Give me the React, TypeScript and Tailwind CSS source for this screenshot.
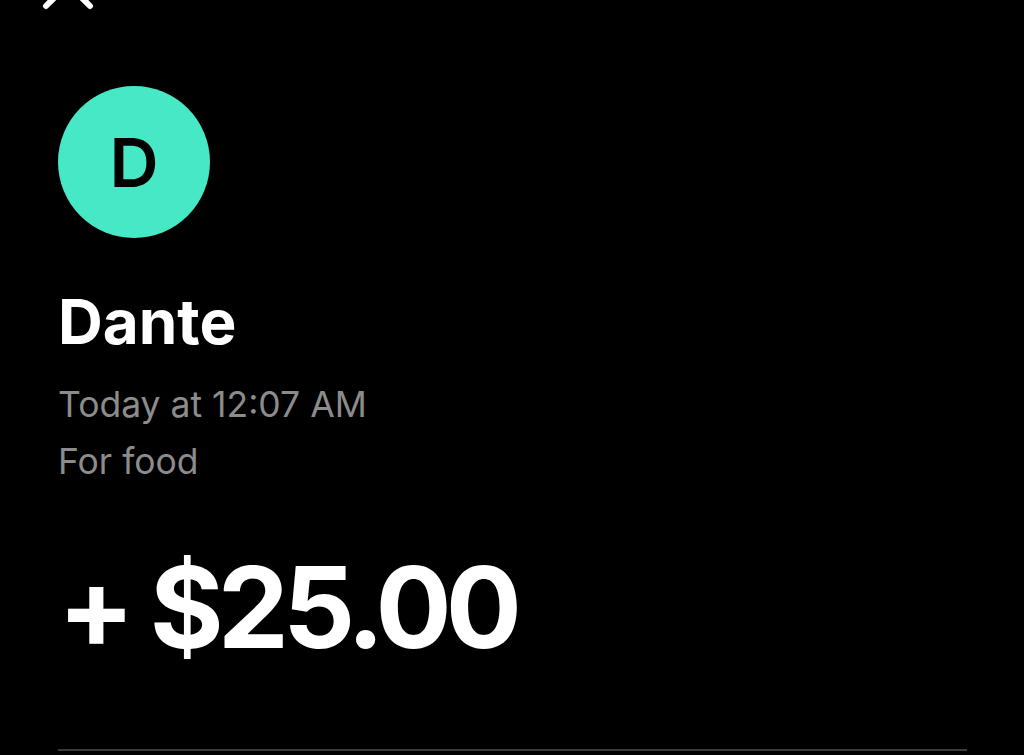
export default function App() {
  return (
    <div
      className="h-[755px] w-[1024px] overflow-hidden bg-black pl-[58px] pr-[57px]"
      style={{ fontFamily: "Inter, 'Liberation Sans', sans-serif" }}
    >
      <svg
        width="52"
        height="52"
        viewBox="0 0 52 52"
        className="ml-[-16px] mt-[-42px] block"
      >
        <path d="M4 4 L48 48 M48 4 L4 48" stroke="white" strokeWidth="6" strokeLinecap="round" />
      </svg>
      <div className="mt-[76px] flex h-[152px] w-[152px] items-center justify-center rounded-full bg-[#46e8c5]">
        <span className="text-[68px] font-semibold leading-none text-black">D</span>
      </div>
      <div className="mt-[53px] text-[62px] font-bold leading-none text-white">Dante</div>
      <div className="mt-[34px] text-[35.5px] leading-none text-[#8c8c8c]">Today at 12:07 AM</div>
      <div className="mt-[21.5px] text-[35.5px] leading-none text-[#8c8c8c]">For food</div>
      <div className="mt-[71px] text-[113px] font-bold leading-none tracking-[-0.052em] text-white">+ $25.00</div>
      <div className="mt-[85px] h-[2px] bg-[#3a3a3a]" />
    </div>
  );
}
